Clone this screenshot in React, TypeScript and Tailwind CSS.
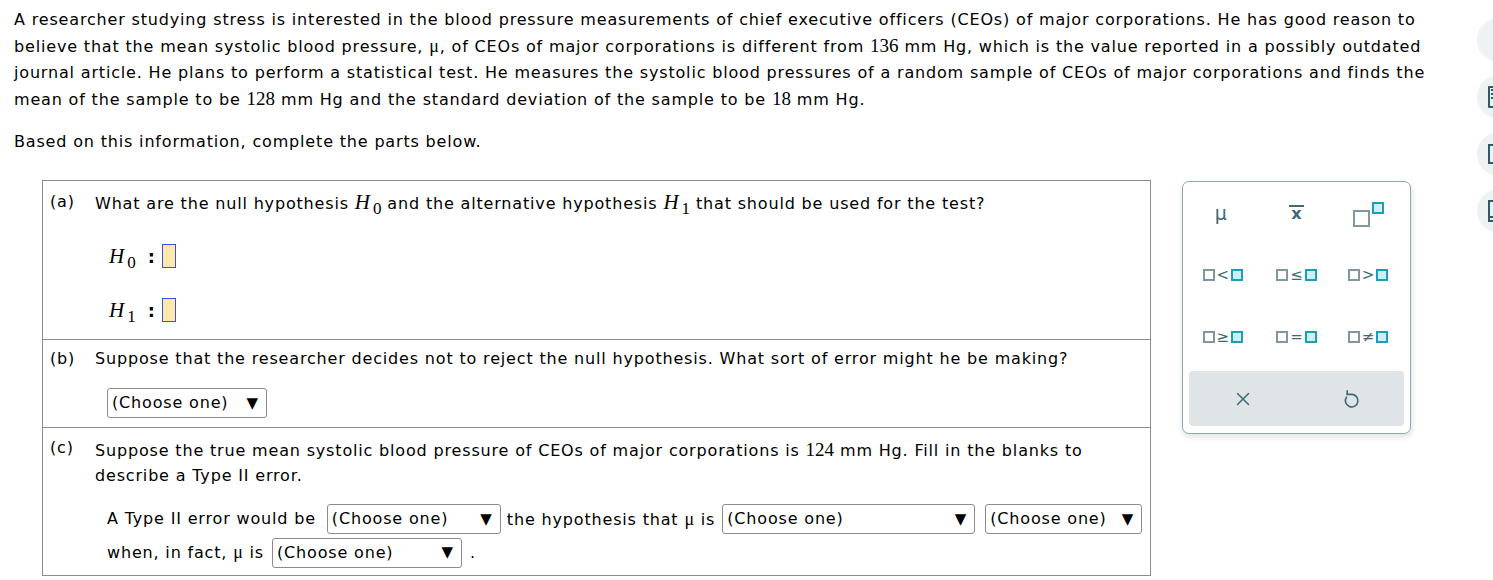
import { X } from "lucide-react";

const serif = "font-['Liberation_Serif','Times_New_Roman',serif]";

// number in the Times-like math font
const Num = ({ children }: { children: React.ReactNode }) => (
  <span className={`${serif} text-[19px] tracking-normal`}>{children}</span>
);

const Mu = () => <span className={`${serif} text-[18px]`}>μ</span>;

const Hyp = ({ sub }: { sub: string }) => (
  <span className={`${serif} italic text-[21px] leading-none tracking-normal`}>
    H
    <sub className="not-italic text-[17px] relative top-[5px] align-baseline ml-[3px] leading-none">{sub}</sub>
  </span>
);

const Choose = ({ w }: { w: string }) => (
  <span
    className={`${w} inline-flex h-[30px] items-center justify-between rounded-[3px] border border-[#8c8c8c] bg-white pl-[4px] pr-[8px] align-middle`}
  >
    <span>(Choose one)</span>
    <span className="text-[15px] tracking-normal">▼</span>
  </span>
);

const AnswerBox = () => (
  <span className="inline-block h-[24px] w-[14px] border-[1.5px] border-[#3b4ff0] bg-[#fde8a8] align-middle" />
);

const Sq = ({ blue }: { blue?: boolean }) =>
  blue ? (
    <span className="inline-block h-[12px] w-[12px] border-2 border-[#1c9db8] bg-[#cdeef3]" />
  ) : (
    <span className="inline-block h-[12px] w-[12px] border-2 border-[#7f979d] bg-white" />
  );

const Rel = ({ op }: { op: string }) => (
  <span className="flex items-center gap-[2px] font-['DejaVu_Sans',sans-serif] text-[15px] tracking-normal text-[#3f6a75]">
    <Sq />
    <span className="leading-none">{op}</span>
    <Sq blue />
  </span>
);

const Palette = () => (
  <div className="flex h-[253px] w-[229px] flex-col rounded-[7px] border border-[#8ea8ae] bg-white px-[6px] tracking-normal shadow-[1px_3px_6px_rgba(0,0,0,0.12)]">
    <div className="grid grid-cols-3">
      <div className="flex h-[62px] items-center justify-center pr-[8px] font-['DejaVu_Sans',sans-serif] text-[19px] text-[#3f6a75]">
        μ
      </div>
      <div className="flex h-[62px] items-center justify-center">
        <span className="border-t-2 border-[#3f6a75] px-[2px] font-['DejaVu_Sans',sans-serif] text-[16px] font-bold leading-[14px] text-[#3f6a75]">
          x
        </span>
      </div>
      <div className="flex h-[62px] items-center justify-center">
        <span className="flex items-start pt-[2px]">
          <span className="mt-[8px] inline-block h-[17px] w-[17px] border-2 border-[#7f979d]" />
          <span className="ml-[2px] inline-block h-[12px] w-[12px] border-2 border-[#1c9db8] bg-[#cdeef3]" />
        </span>
      </div>
      <div className="flex h-[62px] items-center justify-center pr-[4px]">
        <Rel op="<" />
      </div>
      <div className="flex h-[62px] items-center justify-center">
        <Rel op="≤" />
      </div>
      <div className="flex h-[62px] items-center justify-center">
        <Rel op=">" />
      </div>
      <div className="flex h-[62px] items-center justify-center pr-[4px]">
        <Rel op="≥" />
      </div>
      <div className="flex h-[62px] items-center justify-center">
        <Rel op="=" />
      </div>
      <div className="flex h-[62px] items-center justify-center">
        <Rel op="≠" />
      </div>
    </div>
    <div className="mt-[3px] grid h-[55px] grid-cols-2 rounded-[4px] bg-[#dfe5e7] text-[#3f6a75]">
      <div className="flex items-center justify-center">
        <X size={22} strokeWidth={1.6} />
      </div>
      <div className="flex items-center justify-center">
        <svg width="20" height="22" viewBox="0 0 20 22" fill="none" stroke="currentColor" strokeWidth="1.6" strokeLinecap="round" strokeLinejoin="round">
          <path d="M6.4 9.2 A6.3 6.3 0 1 0 11.2 6.4 L7.2 6.4" />
          <path d="M7.2 2.8 L7.2 6.4" />
        </svg>
      </div>
    </div>
  </div>
);

const SideButton = ({ children }: { children?: React.ReactNode }) => (
  <div className="flex h-[44px] w-[44px] shrink-0 items-center rounded-full bg-[#eef2f3] pl-[11px]">{children}</div>
);

const SideBar = () => (
  <div className="flex w-[16px] shrink-0 flex-col gap-[13px] overflow-visible pt-[18px]">
    <SideButton />
    <SideButton>
      <span className="flex h-[22px] w-[14px] flex-col gap-[2px] rounded-[1px] border-2 border-[#2f5966] p-[1px]">
        <span className="h-[2px] bg-[#2f5966]" />
        <span className="h-[2px] bg-[#2f5966]" />
        <span className="h-[2px] bg-[#2f5966]" />
      </span>
    </SideButton>
    <SideButton>
      <span className="h-[20px] w-[14px] border-2 border-[#2f5966]" />
    </SideButton>
    <SideButton>
      <span className="flex h-[22px] w-[14px] flex-col justify-end border-2 border-[#2f5966]">
        <span className="h-[4px] border-t-2 border-[#2f5966]" />
      </span>
    </SideButton>
  </div>
);

export default function App() {
  return (
    <div className="flex h-[580px] w-[1493px] overflow-hidden bg-white font-['DejaVu_Sans','Verdana',sans-serif] text-[16px] tracking-[0.83px] text-black">
      <div className="w-[1477px] shrink-0 pl-[14px] pt-[7px]">
        <p className="leading-[26px]">
          A researcher studying stress is interested in the blood pressure measurements of chief executive officers (CEOs) of major corporations. He has good reason to
          <br />
          believe that the mean systolic blood pressure, <Mu />, of CEOs of major corporations is different from <Num>136</Num> mm Hg, which is the value reported in a possibly outdated
          <br />
          journal article. He plans to perform a statistical test. He measures the systolic blood pressures of a random sample of CEOs of major corporations and finds the
          <br />
          mean of the sample to be <Num>128</Num> mm Hg and the standard deviation of the sample to be <Num>18</Num> mm Hg.
        </p>
        <p className="mt-[16px] leading-[26px]">Based on this information, complete the parts below.</p>

        <div className="mt-[25px] flex items-start gap-[31px] pl-[28px]">
          <div className="w-[1109px] border border-[#8c8c8c]">
            {/* part (a) */}
            <div className="flex pt-[10px] pb-[2px]">
              <div className="w-[52px] shrink-0 pl-[7px] leading-[22px]">(a)</div>
              <div className="flex-1">
                <div className="h-[26px] leading-[26px]">
                  What are the null hypothesis <Hyp sub="0" /> and the alternative hypothesis <Hyp sub="1" /> that should be used for the test?
                </div>
                <div className="mt-[12px] flex h-[54px] items-center gap-[6px] pl-[14px]">
                  <Hyp sub="0" />
                  <span className="ml-[6px] text-[18px] font-bold">:</span>
                  <AnswerBox />
                </div>
                <div className="flex h-[54px] items-center gap-[6px] pl-[14px]">
                  <Hyp sub="1" />
                  <span className="ml-[6px] text-[18px] font-bold">:</span>
                  <AnswerBox />
                </div>
              </div>
            </div>

            {/* part (b) */}
            <div className="flex border-t border-[#8c8c8c] pt-[6px] pb-[9px]">
              <div className="w-[52px] shrink-0 pl-[7px] leading-[26px]">(b)</div>
              <div className="flex-1">
                <div className="h-[26px] leading-[26px]">
                  Suppose that the researcher decides not to reject the null hypothesis. What sort of error might he be making?
                </div>
                <div className="mt-[16px] flex pl-[12px]">
                  <Choose w="w-[160px]" />
                </div>
              </div>
            </div>

            {/* part (c) */}
            <div className="flex border-t border-[#8c8c8c] pt-[9px] pb-[7px]">
              <div className="w-[52px] shrink-0 pl-[7px] leading-[22px]">(c)</div>
              <div className="flex-1">
                <div className="leading-[26px]">
                  <div className="h-[26px]">
                    Suppose the true mean systolic blood pressure of CEOs of major corporations is <Num>124</Num> mm Hg. Fill in the blanks to
                  </div>
                  <div className="h-[26px]">describe a Type II error.</div>
                </div>
                <div className="mt-[15px] flex h-[30px] items-center pl-[12px]">
                  <span>A Type II error would be</span>
                  <span className="ml-[11px]"><Choose w="w-[174px]" /></span>
                  <span className="ml-[6px]">the hypothesis that <Mu /> is</span>
                  <span className="ml-[7px]"><Choose w="w-[253px]" /></span>
                  <span className="ml-[10px]"><Choose w="w-[157px]" /></span>
                </div>
                <div className="mt-[3px] flex h-[31px] items-center pl-[12px]">
                  <span>when, in fact, <Mu /> is</span>
                  <span className="ml-[8px]"><Choose w="w-[190px]" /></span>
                  <span className="ml-[8px]">.</span>
                </div>
              </div>
            </div>
          </div>

          <div className="pt-[1px]">
            <Palette />
          </div>
        </div>
      </div>
      <SideBar />
    </div>
  );
}
